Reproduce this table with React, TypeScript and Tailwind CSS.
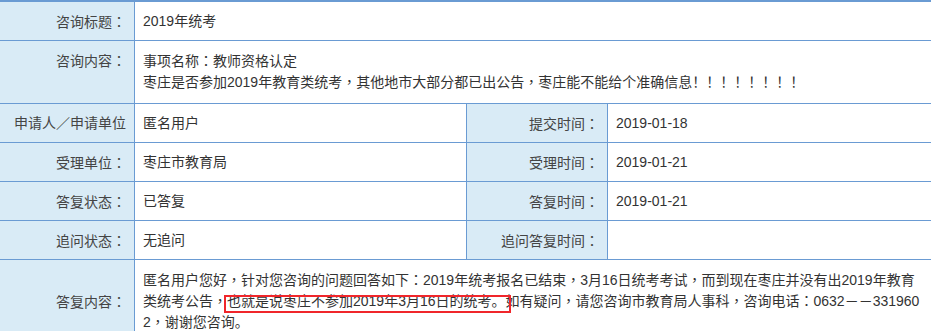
import React from "react";

const font = { fontFamily: '"Liberation Sans", "Noto Sans CJK SC", sans-serif' };
const tc = { fontFamily: '"Noto Sans CJK TC", "Noto Sans CJK SC", sans-serif' };

function P({ t }: { t: string }) {
  const parts = t.split(/([，：])/);
  return (
    <>
      {parts.map((p, i) =>
        p === "，" || p === "：" ? (
          <span key={i} style={tc}>
            {p}
          </span>
        ) : (
          <React.Fragment key={i}>{p}</React.Fragment>
        )
      )}
    </>
  );
}

function Label({ children, className = "" }: { children: React.ReactNode; className?: string }) {
  return (
    <div className={`shrink-0 bg-[#d9ebf6] border-r border-[#6a9bd3] text-right pr-2 text-[#444] ${className}`}>
      {children}
    </div>
  );
}

function Value({ children, className = "" }: { children?: React.ReactNode; className?: string }) {
  return <div className={`pl-2 text-[#333] ${className}`}>{children}</div>;
}

function Row({ children }: { children: React.ReactNode }) {
  return <div className="flex border-b border-[#6a9bd3]">{children}</div>;
}

function SingleFull({ label, value }: { label: string; value: string }) {
  return (
    <Row>
      <Label className="w-[135px] h-[38px] flex items-center justify-end">
        <span><P t={label} /></span>
      </Label>
      <Value className="flex-1 h-[38px] flex items-center">{value}</Value>
    </Row>
  );
}

function Double({ l1, v1, l2, v2 }: { l1: string; v1: string; l2: string; v2: string }) {
  return (
    <Row>
      <Label className="w-[135px] h-[38px] flex items-center justify-end">
        <span><P t={l1} /></span>
      </Label>
      <Value className="w-[332px] h-[38px] flex items-center border-r border-[#6a9bd3]">{v1}</Value>
      <Label className="w-[141px] h-[38px] flex items-center justify-end">
        <span><P t={l2} /></span>
      </Label>
      <Value className="flex-1 h-[38px] flex items-center">{v2}</Value>
    </Row>
  );
}

export default function App() {
  return (
    <div className="w-[931px] h-[331px] overflow-hidden bg-white text-[14px] leading-5" style={font}>
      <div className="border-t-2 border-[#6a9bd3]">
        <SingleFull label="咨询标题：" value="2019年统考" />
        <Row>
          <Label className="w-[135px] pt-[9px]">
            <P t="咨询内容：" />
          </Label>
          <Value className="flex-1 pt-[9px] pb-[11px] whitespace-nowrap">
            <P t="事项名称：教师资格认定" />
            <br />
            <P t="枣庄是否参加2019年教育类统考，其他地市大部分都已出公告，枣庄能不能给个准确信息！！！！！！！！" />
          </Value>
        </Row>
        <Double l1="申请人／申请单位" v1="匿名用户" l2="提交时间：" v2="2019-01-18" />
        <Double l1="受理单位：" v1="枣庄市教育局" l2="受理时间：" v2="2019-01-21" />
        <Double l1="答复状态：" v1="已答复" l2="答复时间：" v2="2019-01-21" />
        <Double l1="追问状态：" v1="无追问" l2="追问答复时间：" v2="" />
        <Row>
          <Label className="w-[135px] flex items-center justify-end">
            <span><P t="答复内容：" /></span>
          </Label>
          <Value className="flex-1 pt-[9px] pb-[11px] whitespace-nowrap">
            <P t="匿名用户您好，针对您咨询的问题回答如下：2019年统考报名已结束，3月16日统考考试，而到现在枣庄并没有出2019年教育" />
            <br />
            <P t="类统考公告，" />
            <span className="relative">
              也就是说枣庄不参加2019年3月16日的统考。
              <span className="absolute left-[-3px] right-[-5px] top-[2px] bottom-[-4px] border-2 border-[#f0262b] pointer-events-none" />
            </span>
            <P t="如有疑问，请您咨询市教育局人事科，咨询电话：0632－－331960" />
            <br />
            <P t="2，谢谢您咨询。" />
          </Value>
        </Row>
      </div>
    </div>
  );
}
